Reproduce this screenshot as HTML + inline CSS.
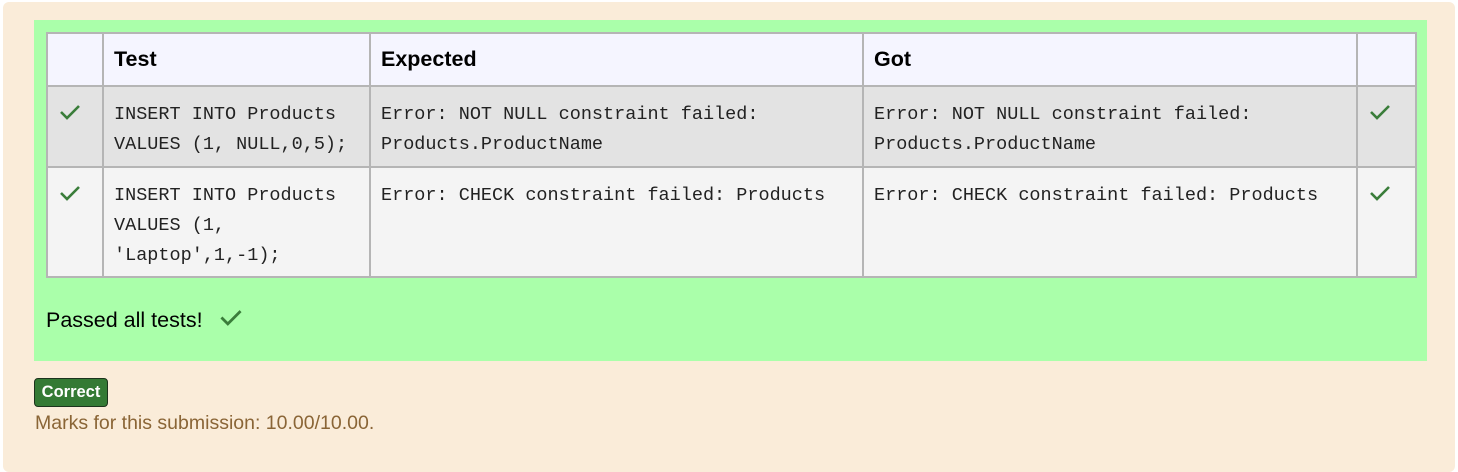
<!DOCTYPE html>
<html><head><style>
html,body{margin:0;padding:0;width:1458px;height:463px;background:#fff;overflow:hidden}
.outer{position:absolute;left:3px;top:2px;width:1452px;height:470px;background:#faecd9;border-radius:6px}
.green{position:absolute;left:34px;top:20px;width:1393px;height:341px;background:#aaffaa}
table{position:absolute;left:46px;top:32px;border-collapse:collapse;font-family:"Liberation Sans",sans-serif}
td,th{border:2px solid #b5b5b5;vertical-align:top;padding:0 10px;text-align:left}
th{background:#f5f5ff;height:51px;font-size:21.5px;font-weight:bold;vertical-align:middle;color:#000}
tr.r1 td{background:#e3e3e3}
tr.r2 td{background:#f4f4f4}
td{font-family:"Liberation Mono",monospace;font-size:18.5px;line-height:30px;color:#222;padding-top:13px}
td.ck{padding:14px 0 0 11px}
.passed{position:absolute;left:46px;top:308px;font:21.5px "Liberation Sans",sans-serif;color:#000}
.badge{position:absolute;left:34px;top:378px;width:72px;height:27px;background:#347a34;border:1.5px solid #1c331c;border-radius:4px;color:#fff;font:bold 16.5px "Liberation Sans",sans-serif;text-align:center;line-height:27px}
.marks{position:absolute;left:35px;top:412px;font:19.5px "Liberation Sans",sans-serif;color:#8a6536}
</style></head><body>
<div class="outer"></div>
<div class="green"></div>
<table>
<tr><th style="width:34px"></th><th style="width:245px">Test</th><th style="width:471px">Expected</th><th style="width:472px">Got</th><th style="width:37px"></th></tr>
<tr class="r1" style="height:81px"><td class="ck"><svg width="22" height="16" viewBox="0 0 22 16"><path d="M2 8l6 6L20 2" fill="none" stroke="#3a7d3a" stroke-width="2.6"/></svg></td><td>INSERT INTO Products<br>VALUES (1, NULL,0,5);</td><td>Error: NOT NULL constraint failed:<br>Products.ProductName</td><td>Error: NOT NULL constraint failed:<br>Products.ProductName</td><td class="ck"><svg width="22" height="16" viewBox="0 0 22 16"><path d="M2 8l6 6L20 2" fill="none" stroke="#3a7d3a" stroke-width="2.6"/></svg></td></tr>
<tr class="r2" style="height:110px"><td class="ck"><svg width="22" height="16" viewBox="0 0 22 16"><path d="M2 8l6 6L20 2" fill="none" stroke="#3a7d3a" stroke-width="2.6"/></svg></td><td>INSERT INTO Products<br>VALUES (1,<br>'Laptop',1,-1);</td><td>Error: CHECK constraint failed: Products</td><td>Error: CHECK constraint failed: Products</td><td class="ck"><svg width="22" height="16" viewBox="0 0 22 16"><path d="M2 8l6 6L20 2" fill="none" stroke="#3a7d3a" stroke-width="2.6"/></svg></td></tr>
</table>
<div class="passed">Passed all tests! <svg style="margin-left:10px;vertical-align:1px" width="24" height="17" viewBox="0 0 22 16"><path d="M2 8l6 6L20 2" fill="none" stroke="#3a7d3a" stroke-width="2.6"/></svg></div>
<div class="badge">Correct</div>
<div class="marks">Marks for this submission: 10.00/10.00.</div>
</body></html>
